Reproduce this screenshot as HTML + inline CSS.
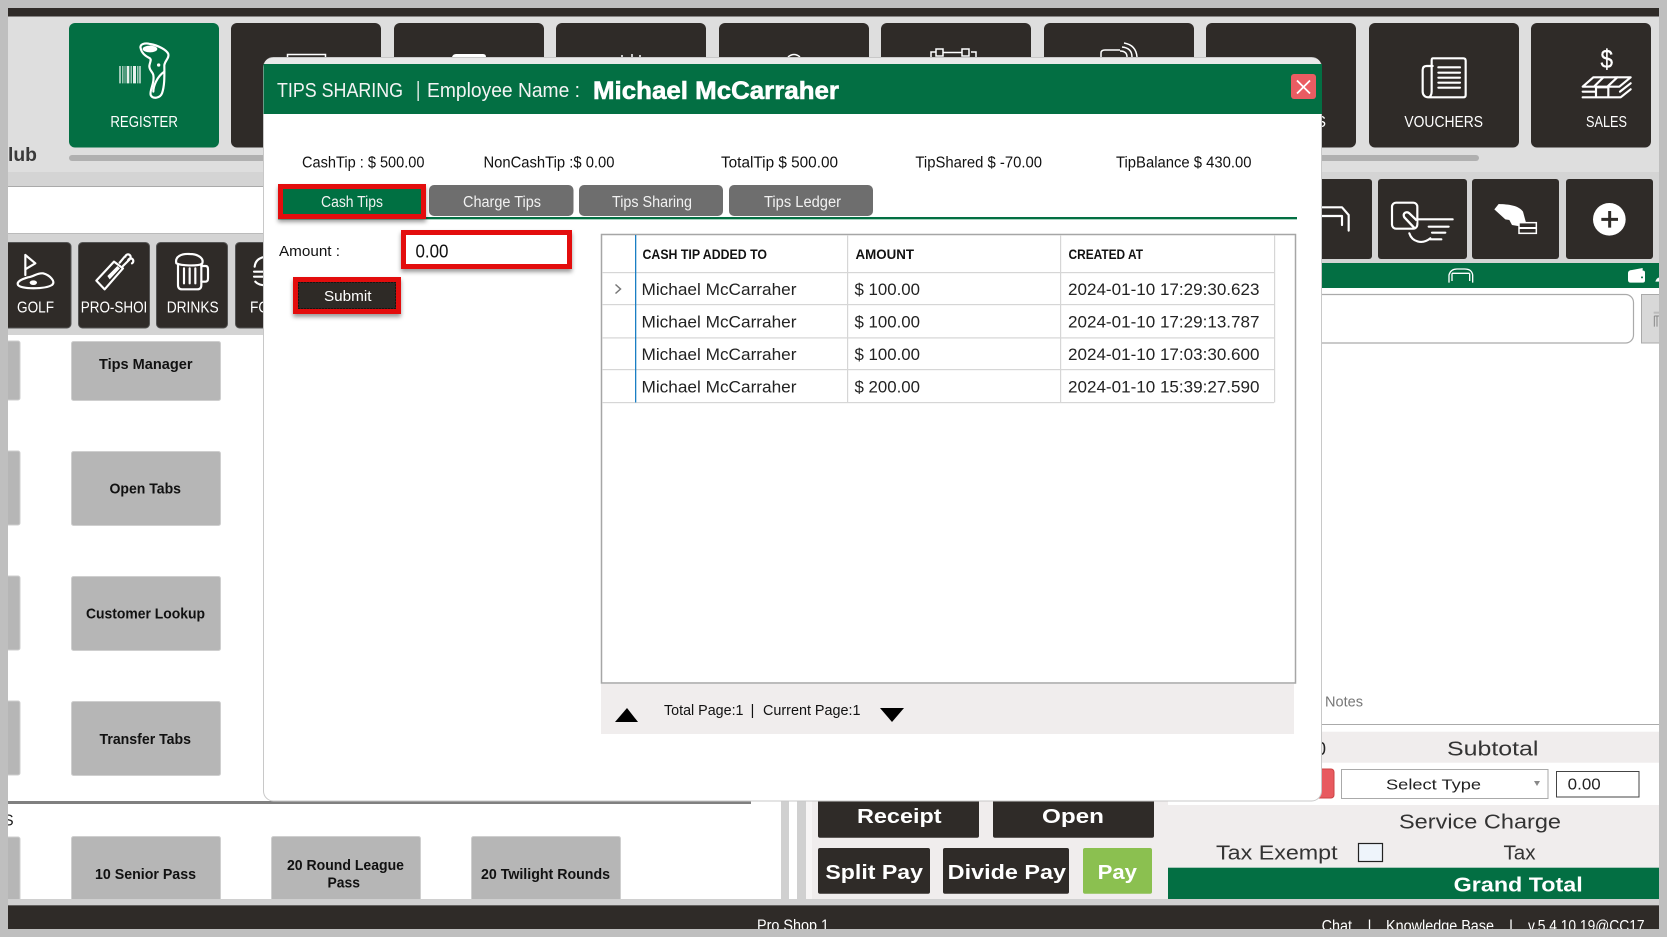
<!DOCTYPE html>
<html lang="en"><head><meta charset="utf-8"><title>Tips Sharing</title>
<style>
html,body{margin:0;padding:0;background:#bfbfbf;width:1667px;height:937px;overflow:hidden}
svg{display:block;font-family:"Liberation Sans",Arial,sans-serif}
.w{fill:#fff}.k{fill:#111}
.ic{fill:none;stroke:#fff;stroke-width:6.500;stroke-linecap:round;stroke-linejoin:round}
</style></head><body>
<svg width="1667" height="937" viewBox="0 0 1667 937" xmlns="http://www.w3.org/2000/svg">
<defs><filter id="sh" x="-20%" y="-30%" width="140%" height="170%"><feDropShadow dx="0" dy="3" stdDeviation="2" flood-color="#000" flood-opacity=".4"/></filter></defs>

<!-- base -->
<rect x="8" y="8" width="1651" height="921" fill="#fff"/>
<rect x="8" y="16" width="1651" height="156" fill="#dedede"/>
<rect x="8" y="8" width="1651" height="8.500" fill="#2f2b28"/>
<rect x="8" y="172" width="1651" height="14" fill="#d4d4d4"/>
<rect x="8" y="186" width="260" height="1" fill="#aaa"/>
<rect x="8" y="234" width="260" height="101" fill="#d4d4d4"/>
<rect x="8" y="233" width="260" height="1" fill="#bbb"/>

<!-- top nav -->
<g fill="#2f2b28">
<rect x="69" y="23" width="150" height="124.500" rx="6" fill="#036f43"/>
<rect x="231" y="23" width="150" height="124.500" rx="6"/>
<rect x="394" y="23" width="150" height="124.500" rx="6"/>
<rect x="556" y="23" width="150" height="124.500" rx="6"/>
<rect x="719" y="23" width="150" height="124.500" rx="6"/>
<rect x="881" y="23" width="150" height="124.500" rx="6"/>
<rect x="1044" y="23" width="150" height="124.500" rx="6"/>
<rect x="1206" y="23" width="150" height="124.500" rx="6"/>
<rect x="1369" y="23" width="150" height="124.500" rx="6"/>
<rect x="1531" y="23" width="120" height="124.500" rx="6"/>
</g>
<!-- peeks of hidden icons -->
<path d="M287.500 57V54.500H325.500V57" fill="none" stroke="#fff" stroke-width="1.500"/>
<path d="M452 57Q453 54 456 54H483Q486 54 486 57Z" fill="#fff"/>
<path d="M622 57V55M632 57V54M640 57V55" stroke="#fff" stroke-width="1.500"/>
<path d="M788 57Q794 52 800 57" fill="none" stroke="#fff" stroke-width="1.500"/>
<path d="M931 57V52H936M971 52H976V57M943 52.500H962" fill="none" stroke="#fff" stroke-width="1.500"/>
<rect x="936" y="49" width="7" height="7" fill="none" stroke="#fff" stroke-width="1.500"/>
<rect x="962" y="49" width="7" height="7" fill="none" stroke="#fff" stroke-width="1.500"/>
<path d="M1101 57V53Q1101 50 1105 50H1120M1120 51Q1127 51 1127 57M1122 47Q1132 48 1132 57M1124 43Q1136 45 1137 57" fill="none" stroke="#fff" stroke-width="1.500"/>

<rect x="69" y="155" width="1410" height="6" rx="3" fill="#b0b0b0"/>
<text x="8" y="161" font-size="19.500" font-weight="700" fill="#3a3a3a" textLength="29" lengthAdjust="spacingAndGlyphs">lub</text>

<!-- register icon -->
<g transform="translate(100,30) scale(.33333)">
<path d="M58 108H62V160H58ZM67 108H70V160H67ZM74 108H76V160H74ZM80 108H88V160H80ZM92 108H95V160H92ZM99 108H108V160H99ZM112 108H115V160H112ZM118 108H122V160H118Z" fill="#fff" opacity=".9"/>
<path d="M122 55C118 42 135 38 150 42C175 46 200 60 205 72C208 85 196 90 193 105C193 130 195 165 186 190C180 205 158 208 152 195C148 180 165 160 160 135C158 125 148 122 148 108C150 95 155 90 150 85C135 78 125 70 122 55Z" class="ic"/>
<path d="M193 125C170 140 160 170 160 185" class="ic" stroke-width="4"/>
<ellipse cx="150" cy="57" rx="22" ry="10" fill="#fff"/>
<circle cx="176" cy="105" r="5" fill="#fff"/>
</g>
<text x="110.400" y="126.800" font-size="15.500" fill="#fff" textLength="67.500" lengthAdjust="spacingAndGlyphs">REGISTER</text>
<text x="1316" y="126.800" font-size="15.500" fill="#fff" textLength="10" lengthAdjust="spacingAndGlyphs">S</text>
<text x="1404.400" y="126.800" font-size="15.500" fill="#fff" textLength="78.600" lengthAdjust="spacingAndGlyphs">VOUCHERS</text>
<text x="1586" y="126.800" font-size="15.500" fill="#fff" textLength="41" lengthAdjust="spacingAndGlyphs">SALES</text>

<!-- vouchers and sales icons -->
<g transform="translate(1370,40) scale(.33333)">
<path d="M188 55H280Q287 55 287 62V165Q287 172 280 172H175C165 172 158 165 158 155V90Q158 78 170 78H188M188 55Q185 55 185 62V155C185 165 180 172 175 172" class="ic"/>
<path d="M205 82H270M205 98H270M205 113H270M205 128H270M205 143H270" class="ic" stroke-width="5" stroke-linecap="butt"/>
<path d="M670 112H782L748 140H638ZM700 112L672 140M742 112L712 140M638 155H678M638 172H752L782 148M750 155L782 130M678 142V170M715 142V170M678 142H715" class="ic" stroke-width="5.500" stroke-linecap="butt"/>
</g>
<text x="1600.500" y="68" font-size="26" fill="#fff" stroke="#fff" stroke-width=".3" textLength="12.500" lengthAdjust="spacingAndGlyphs">$</text>

<!-- category row -->
<g fill="#2f2b28" stroke="#555" stroke-width="1">
<rect x="1" y="242.500" width="70" height="85.500" rx="4"/>
<rect x="78.500" y="242.500" width="71" height="85.500" rx="4"/>
<rect x="156.500" y="242.500" width="71" height="85.500" rx="4"/>
<rect x="235.500" y="242.500" width="60" height="85.500" rx="4"/>
</g>
<g transform="translate(8,240) scale(.33333)">
<path d="M52 45V105M52 45L82 70L52 88" class="ic"/>
<path d="M60 112C40 118 25 125 30 135C40 148 110 148 132 135C145 125 125 105 105 100C85 98 80 110 60 112Z" class="ic"/>
<ellipse cx="76" cy="128" rx="11" ry="7" fill="#fff"/>
<path d="M265 122L318 65L345 85L290 148Z" class="ic" stroke-width="8"/>
<path d="M298 108L328 78L336 85L305 118Z" fill="#fff"/>
<path d="M335 68L350 50M345 78L365 58M352 50A8 8 0 1 1 364 58M360 62A8 8 0 1 1 372 70" class="ic" stroke-width="7"/>
<path d="M510 72V135Q510 148 522 148H568Q580 148 580 135V72" class="ic" stroke-width="8"/>
<path d="M505 70C500 50 520 40 545 42C570 42 590 55 582 72C570 78 520 78 505 70Z" class="ic" stroke-width="7"/>
<path d="M528 85V130M545 85V130M562 85V130" class="ic" stroke-width="7"/>
<path d="M580 78H593Q600 78 600 88V115Q600 125 592 125H580" class="ic" stroke-width="7"/>
<path d="M740 80C742 60 755 52 775 50M738 95H775M738 110H775M742 125C748 132 760 136 775 136" class="ic" stroke-width="7"/>
</g>
<text x="17" y="312.700" font-size="15.500" fill="#fff" textLength="37" lengthAdjust="spacingAndGlyphs">GOLF</text>
<svg x="78" y="295" width="68" height="25" overflow="hidden"><text x="2.700" y="17.700" font-size="15.500" fill="#fff" textLength="72" lengthAdjust="spacingAndGlyphs">PRO-SHOP</text></svg>
<text x="166.700" y="312.700" font-size="15.500" fill="#fff" textLength="52" lengthAdjust="spacingAndGlyphs">DRINKS</text>
<text x="250" y="312.700" font-size="15.500" fill="#fff" textLength="19" lengthAdjust="spacingAndGlyphs">FO</text>

<!-- left item buttons -->
<g fill="#b6b6b6" stroke="#cfcfcf" stroke-width="1">
<rect x="-10" y="341" width="30" height="59" rx="2"/>
<rect x="71.500" y="341.500" width="149" height="59" rx="2"/>
<rect x="-10" y="451" width="30" height="74" rx="2"/>
<rect x="71.500" y="451.500" width="149" height="74" rx="2"/>
<rect x="-10" y="576" width="30" height="74" rx="2"/>
<rect x="71.500" y="576.500" width="149" height="74" rx="2"/>
<rect x="-10" y="701" width="30" height="74" rx="2"/>
<rect x="71.500" y="701.500" width="149" height="74" rx="2"/>
<rect x="-10" y="837" width="30" height="80" rx="2"/>
<rect x="71.500" y="836.500" width="149" height="80" rx="2"/>
<rect x="271.500" y="836.500" width="149" height="80" rx="2"/>
<rect x="471.500" y="836.500" width="149" height="80" rx="2"/>
</g>
<g font-size="15" font-weight="700" fill="#111">
<text x="99" y="369" textLength="93.500" lengthAdjust="spacingAndGlyphs">Tips Manager</text>
<text x="109.500" y="493.500" textLength="71.500" lengthAdjust="spacingAndGlyphs">Open Tabs</text>
<text x="86" y="618.500" textLength="119" lengthAdjust="spacingAndGlyphs">Customer Lookup</text>
<text x="99.500" y="744" textLength="91.500" lengthAdjust="spacingAndGlyphs">Transfer Tabs</text>
<text x="95" y="879" textLength="101" lengthAdjust="spacingAndGlyphs">10 Senior Pass</text>
<text x="287" y="870" textLength="117" lengthAdjust="spacingAndGlyphs">20 Round League</text>
<text x="327.500" y="887.700" textLength="32.500" lengthAdjust="spacingAndGlyphs">Pass</text>
<text x="481" y="879" textLength="129" lengthAdjust="spacingAndGlyphs">20 Twilight Rounds</text>
</g>
<rect x="8" y="801" width="743" height="3" fill="#808080"/>
<text x="3" y="825.700" font-size="16" fill="#222">S</text>

<!-- gutter and bottom -->
<rect x="781" y="801" width="8" height="98" fill="#d0d0d0"/>
<rect x="797" y="801" width="9" height="98" fill="#d0d0d0"/>
<rect x="806" y="801" width="6" height="98" fill="#f7f5f5"/>
<rect x="812" y="801" width="356" height="98" fill="#f0eded"/>
<rect x="8" y="899" width="1651" height="6" fill="#d0d0d0"/>
<rect x="8" y="905" width="1651" height="1" fill="#999"/>
<rect x="8" y="905.500" width="1651" height="24" fill="#2f2b28"/>

<!-- pay buttons -->
<g fill="#2f2b28">
<rect x="818" y="795" width="161" height="42.700" rx="2"/>
<rect x="993" y="795" width="161" height="42.700" rx="2"/>
<rect x="818" y="848" width="112" height="45.700" rx="2"/>
<rect x="943" y="848" width="126" height="45.700" rx="2"/>
<rect x="1083" y="848" width="69" height="45.700" rx="2" fill="#8bc050"/>
</g>
<g font-size="20" font-weight="700" fill="#fff">
<text x="857" y="823" textLength="84.600" lengthAdjust="spacingAndGlyphs">Receipt</text>
<text x="1042" y="823" textLength="62" lengthAdjust="spacingAndGlyphs">Open</text>
<text x="825.400" y="879" textLength="97.600" lengthAdjust="spacingAndGlyphs">Split Pay</text>
<text x="947.700" y="879" textLength="118.300" lengthAdjust="spacingAndGlyphs">Divide Pay</text>
<text x="1097.600" y="879" textLength="39.400" lengthAdjust="spacingAndGlyphs">Pay</text>
</g>

<!-- right panel -->
<rect x="1168" y="172" width="491" height="91" fill="#d4d4d4"/>
<g fill="#2f2b28">
<rect x="1240" y="179" width="132" height="80" rx="3"/>
<rect x="1378" y="179" width="89" height="80" rx="3"/>
<rect x="1472" y="179" width="87" height="80" rx="3"/>
<rect x="1566" y="179" width="87" height="80" rx="3"/>
</g>
<rect x="1168" y="263" width="491" height="25" fill="#036f43"/>
<rect x="1200" y="294.500" width="433.500" height="48.500" rx="8" fill="#fff" stroke="#aaa" stroke-width="1.200"/>
<rect x="1641.500" y="294.500" width="30" height="48.500" fill="#d8d8d8" stroke="#aaa"/>
<g transform="translate(1322,180) scale(.33333)">
<path d="M0 82H60L80 105V152M0 108H60V135" class="ic" stroke-linecap="butt"/>
<rect x="210" y="68" width="76" height="78" rx="12" class="ic" stroke-width="7"/>
<path d="M290 118H392M320 140H380M330 158H370M325 178H358" class="ic" stroke-width="7"/>
<path d="M262 160C270 185 300 195 325 175" class="ic" stroke-width="7"/>
<path d="M278 145L247 112C240 100 254 92 262 100L285 122" fill="#2f2b28" stroke="#fff" stroke-width="7"/>
<path d="M517 88L530 72C560 73 590 76 603 95L612 128L604 138L588 138L570 135L562 120L550 118Z" fill="#fff"/>
<rect x="591" y="128" width="52" height="32" fill="#2f2b28" stroke="#fff" stroke-width="4.500"/>
<rect x="591" y="141" width="52" height="6" fill="#fff"/>
<circle cx="862" cy="118" r="49" fill="#fff"/>
<path d="M838 118H888M863 93V143" stroke="#2f2b28" stroke-width="9" fill="none"/>
<path d="M381 308V285C385 270 395 267 405 267H428C440 267 450 272 452 285V308M390 280H443M390 280V303M443 280V303" fill="none" stroke="#fff" stroke-width="4"/>
<path d="M918 280Q918 270 930 270L962 264V272H964Q969 272 969 278V302Q969 308 962 308H926Q918 308 918 300Z" fill="#fff"/>
<circle cx="960" cy="292" r="3" fill="#036f43"/>
<path d="M1000 305Q1003 294 1012 292L1020 300V305Z" fill="#fff"/>
<rect x="995" y="395" width="17" height="6" fill="#bbb"/>
<path d="M997 408H1012M997 408V440M1005 408V440" fill="none" stroke="#888" stroke-width="3"/>
</g>

<text x="1325" y="706.700" font-size="15" fill="#777" textLength="38" lengthAdjust="spacingAndGlyphs">Notes</text>
<rect x="1168" y="724" width="491" height="1" fill="#aaa"/>
<rect x="1168" y="731.700" width="491" height="31" fill="#f0eded"/>
<rect x="1168" y="805" width="491" height="63" fill="#f0eded"/>
<rect x="1168" y="867.700" width="491" height="31.300" fill="#036f43"/>
<text x="1316" y="755" font-size="18" fill="#222">0</text>
<g font-size="20" fill="#333">
<text x="1447" y="755.500" textLength="91.400" lengthAdjust="spacingAndGlyphs">Subtotal</text>
<text x="1399" y="828.700" textLength="162" lengthAdjust="spacingAndGlyphs">Service Charge</text>
<text x="1216" y="859.500" textLength="121.600" lengthAdjust="spacingAndGlyphs">Tax Exempt</text>
<text x="1503.500" y="859.500" textLength="32" lengthAdjust="spacingAndGlyphs">Tax</text>
</g>
<text x="1453.700" y="891.700" font-size="20" font-weight="700" fill="#fff" textLength="129" lengthAdjust="spacingAndGlyphs">Grand Total</text>
<rect x="1250" y="769" width="84" height="29" rx="3" fill="#e85a5f" stroke="#c44" stroke-width="1"/>
<rect x="1341.500" y="769.500" width="206.500" height="29" fill="#fff" stroke="#aaa"/>
<text x="1386" y="789.500" font-size="15" fill="#222" textLength="95" lengthAdjust="spacingAndGlyphs">Select Type</text>
<path d="M1534 781H1540L1537 786Z" fill="#888"/>
<rect x="1556.500" y="771.500" width="82.500" height="25.500" fill="#fff" stroke="#444"/>
<text x="1567.700" y="789.500" font-size="16" fill="#222" textLength="33" lengthAdjust="spacingAndGlyphs">0.00</text>
<rect x="1358.500" y="843.500" width="24" height="18" fill="#eef4fb" stroke="#222" stroke-width="1.200"/>

<!-- footer text -->
<g font-size="15.500" fill="#fff">
<text x="757" y="930.500" textLength="72" lengthAdjust="spacingAndGlyphs">Pro Shop 1</text>
<text x="1321.600" y="931" textLength="30.400" lengthAdjust="spacingAndGlyphs">Chat</text>
<text x="1367.500" y="931">|</text>
<text x="1386" y="931" textLength="108" lengthAdjust="spacingAndGlyphs">Knowledge Base</text>
<text x="1509" y="931">|</text>
<text x="1528" y="931" textLength="116.600" lengthAdjust="spacingAndGlyphs">v.5.4.10.19@CC17</text>
</g>

<!-- MODAL -->
<rect x="263.500" y="57.500" width="1058" height="743.500" rx="10" fill="#fff" stroke="#c8c8c8"/>
<path d="M264 64V67Q264 58 273 58H1312Q1321 58 1321 67V64Z" fill="#e9e9e9"/>
<rect x="263.500" y="64" width="1058.500" height="50" fill="#036f43"/>
<text x="277" y="97" font-size="20.500" fill="#f4f4f4" textLength="126" lengthAdjust="spacingAndGlyphs">TIPS SHARING</text>
<rect x="417.500" y="81" width="1.300" height="20" fill="#f4f4f4"/>
<text x="427" y="97" font-size="20.500" fill="#f4f4f4" textLength="153" lengthAdjust="spacingAndGlyphs">Employee Name :</text>
<text x="593" y="99" font-size="25" font-weight="700" fill="#fff" stroke="#fff" stroke-width=".6" textLength="246" lengthAdjust="spacingAndGlyphs">Michael McCarraher</text>
<rect x="1291" y="74" width="25" height="25" rx="3" fill="#ea5c62"/>
<path d="M1297 80.500L1310 93.500M1310 80.500L1297 93.500" stroke="#fff" stroke-width="1.800" fill="none"/>

<g font-size="15.500" fill="#111">
<text x="302" y="167.500" textLength="122.500" lengthAdjust="spacingAndGlyphs">CashTip : $ 500.00</text>
<text x="483.500" y="167.500" textLength="131" lengthAdjust="spacingAndGlyphs">NonCashTip :$ 0.00</text>
<text x="721" y="167.500" textLength="117" lengthAdjust="spacingAndGlyphs">TotalTip $ 500.00</text>
<text x="915.400" y="167.500" textLength="126.600" lengthAdjust="spacingAndGlyphs">TipShared $ -70.00</text>
<text x="1116" y="167.500" textLength="135.500" lengthAdjust="spacingAndGlyphs">TipBalance $ 430.00</text>
</g>

<!-- tabs -->
<rect x="278" y="217" width="1019" height="2" fill="#036f43"/>
<rect x="278" y="219" width="1019" height="1" fill="#a8d4c0"/>
<g fill="#6e6e6e">
<rect x="429" y="185" width="144.500" height="31" rx="5"/>
<rect x="579" y="185" width="144" height="31" rx="5"/>
<rect x="729" y="185" width="144" height="31" rx="5"/>
</g>
<rect x="280.500" y="186.500" width="143" height="30" fill="#036f43" stroke="#e30c0c" stroke-width="5" filter="url(#sh)"/>
<g font-size="15.500" fill="#f2f2f2">
<text x="321" y="207" textLength="62" lengthAdjust="spacingAndGlyphs">Cash Tips</text>
<text x="463" y="207" textLength="78" lengthAdjust="spacingAndGlyphs">Charge Tips</text>
<text x="612" y="207" textLength="80" lengthAdjust="spacingAndGlyphs">Tips Sharing</text>
<text x="764" y="207" textLength="77" lengthAdjust="spacingAndGlyphs">Tips Ledger</text>
</g>

<!-- form -->
<text x="279" y="256" font-size="15" fill="#111" textLength="61" lengthAdjust="spacingAndGlyphs">Amount :</text>
<rect x="403.500" y="232.500" width="166" height="34" fill="#fff" stroke="#e30c0c" stroke-width="5" filter="url(#sh)"/>
<text x="415.500" y="257.500" font-size="18" fill="#111" textLength="33" lengthAdjust="spacingAndGlyphs">0.00</text>
<rect x="295.500" y="279.500" width="103" height="32" fill="#2f2b28" stroke="#e30c0c" stroke-width="5" filter="url(#sh)"/>
<rect x="298.500" y="282.500" width="97" height="26" fill="none" stroke="#000" stroke-width="1" stroke-dasharray="1 2"/>
<text x="324" y="301" font-size="15" fill="#fff" textLength="47.500" lengthAdjust="spacingAndGlyphs">Submit</text>

<!-- grid -->
<rect x="601.500" y="234.500" width="694" height="448.500" fill="#fff" stroke="#a6a6a6" stroke-width="1.500"/>
<g fill="#d6d6d6">
<rect x="847" y="235" width="1.200" height="167.500"/>
<rect x="1060" y="235" width="1.200" height="167.500"/>
<rect x="1274" y="235" width="1.200" height="167.500"/>
<rect x="602" y="272" width="672" height="1.200"/>
<rect x="602" y="304" width="672" height="1.200"/>
<rect x="602" y="337.300" width="672" height="1.200"/>
<rect x="602" y="369" width="672" height="1.200"/>
<rect x="602" y="402" width="672" height="1.200"/>
</g>
<rect x="635" y="235" width="1.300" height="167.500" fill="#1a7fc4"/>
<g font-size="13.500" font-weight="700" fill="#111">
<text x="642.500" y="259" textLength="124.500" lengthAdjust="spacingAndGlyphs">CASH TIP ADDED TO</text>
<text x="855.500" y="259" textLength="58.500" lengthAdjust="spacingAndGlyphs">AMOUNT</text>
<text x="1068.500" y="259" textLength="74.500" lengthAdjust="spacingAndGlyphs">CREATED AT</text>
</g>
<path d="M615.500 284.500L620.500 289L615.500 293.500" fill="none" stroke="#777" stroke-width="1.500"/>
<g font-size="17" fill="#222">
<text x="641.500" y="295" textLength="155" lengthAdjust="spacingAndGlyphs">Michael McCarraher</text>
<text x="854.500" y="295" textLength="65.500" lengthAdjust="spacingAndGlyphs">$ 100.00</text>
<text x="1068" y="295" textLength="191.500" lengthAdjust="spacingAndGlyphs">2024-01-10 17:29:30.623</text>
<text x="641.500" y="327.700" textLength="155" lengthAdjust="spacingAndGlyphs">Michael McCarraher</text>
<text x="854.500" y="327.700" textLength="65.500" lengthAdjust="spacingAndGlyphs">$ 100.00</text>
<text x="1068" y="327.700" textLength="191.500" lengthAdjust="spacingAndGlyphs">2024-01-10 17:29:13.787</text>
<text x="641.500" y="360" textLength="155" lengthAdjust="spacingAndGlyphs">Michael McCarraher</text>
<text x="854.500" y="360" textLength="65.500" lengthAdjust="spacingAndGlyphs">$ 100.00</text>
<text x="1068" y="360" textLength="191.500" lengthAdjust="spacingAndGlyphs">2024-01-10 17:03:30.600</text>
<text x="641.500" y="392.300" textLength="155" lengthAdjust="spacingAndGlyphs">Michael McCarraher</text>
<text x="854.500" y="392.300" textLength="65.500" lengthAdjust="spacingAndGlyphs">$ 200.00</text>
<text x="1068" y="392.300" textLength="191.500" lengthAdjust="spacingAndGlyphs">2024-01-10 15:39:27.590</text>
</g>

<!-- pager -->
<rect x="601" y="684" width="693" height="50" fill="#f0eded"/>
<path d="M615 722L627 708L638 722Z" fill="#000"/>
<g font-size="15" fill="#111">
<text x="664" y="715" textLength="79.500" lengthAdjust="spacingAndGlyphs">Total Page:1</text>
<text x="750.500" y="715">|</text>
<text x="763" y="715" textLength="97.500" lengthAdjust="spacingAndGlyphs">Current Page:1</text>
</g>
<path d="M880 708H904L892 722Z" fill="#000"/>

<!-- screenshot frame -->
<path d="M0 0H1667V937H0ZM8 8V929H1659V8Z" fill="#bfbfbf" fill-rule="evenodd"/>
</svg>
</body></html>
